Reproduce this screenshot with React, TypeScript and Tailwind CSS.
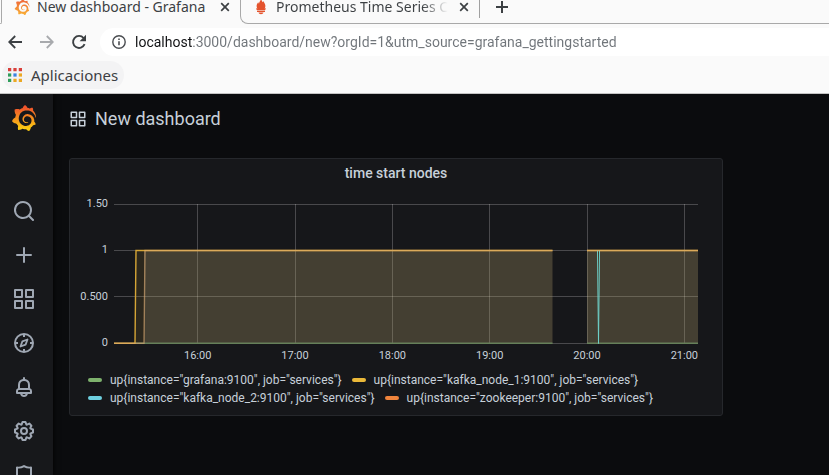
import type { ReactNode } from "react";
import { SiGrafana } from "react-icons/si";

const uiFont = "font-['Noto_Sans','Open_Sans',sans-serif]";

const icons = {
  apps: "M10,13H3a1,1,0,0,0-1,1v7a1,1,0,0,0,1,1h7a1,1,0,0,0,1-1V14A1,1,0,0,0,10,13ZM9,20H4V15H9ZM21,2H14a1,1,0,0,0-1,1v7a1,1,0,0,0,1,1h7a1,1,0,0,0,1-1V3A1,1,0,0,0,21,2ZM20,9H15V4h5Zm1,4H14a1,1,0,0,0-1,1v7a1,1,0,0,0,1,1h7a1,1,0,0,0,1-1V14A1,1,0,0,0,21,13Zm-1,7H15V15h5ZM10,2H3A1,1,0,0,0,2,3v7a1,1,0,0,0,1,1h7a1,1,0,0,0,1-1V3A1,1,0,0,0,10,2ZM9,9H4V4H9Z",
  search:
    "M21.71,20.29,18,16.61A9,9,0,1,0,16.61,18l3.68,3.68a1,1,0,0,0,1.42,0A1,1,0,0,0,21.71,20.29ZM11,18a7,7,0,1,1,7-7A7,7,0,0,1,11,18Z",
  plus: "M19,11H13V5a1,1,0,0,0-2,0v6H5a1,1,0,0,0,0,2h6v6a1,1,0,0,0,2,0V13h6a1,1,0,0,0,0-2Z",
  bell: "M18,13.18V10a6,6,0,0,0-5-5.91V3a1,1,0,0,0-2,0V4.09A6,6,0,0,0,6,10v3.18A3,3,0,0,0,4,16v2a1,1,0,0,0,1,1H8.14a4,4,0,0,0,7.72,0H19a1,1,0,0,0,1-1V16A3,3,0,0,0,18,13.18ZM8,10a4,4,0,0,1,8,0v3H8Zm4,10a2,2,0,0,1-1.72-1h3.44A2,2,0,0,1,12,20Zm6-3H6V16a1,1,0,0,1,1-1H17a1,1,0,0,1,1,1Z",
  cog: "M21.32,9.55l-1.89-.63.89-1.78A1,1,0,0,0,20.13,6L18,3.87a1,1,0,0,0-1.15-.19l-1.78.89-.63-1.89A1,1,0,0,0,13.5,2h-3a1,1,0,0,0-.95.68L8.92,4.57,7.14,3.68A1,1,0,0,0,6,3.87L3.87,6a1,1,0,0,0-.19,1.15l.89,1.78-1.89.63A1,1,0,0,0,2,10.5v3a1,1,0,0,0,.68.95l1.89.63-.89,1.78A1,1,0,0,0,3.87,18L6,20.13a1,1,0,0,0,1.15.19l1.78-.89.63,1.89a1,1,0,0,0,.95.68h3a1,1,0,0,0,.95-.68l.63-1.89,1.78.89A1,1,0,0,0,18,20.13L20.13,18a1,1,0,0,0,.19-1.15l-.89-1.78,1.89-.63A1,1,0,0,0,22,13.5v-3A1,1,0,0,0,21.32,9.55ZM20,12.78l-1.2.4A2,2,0,0,0,17.64,16l.57,1.14-1.1,1.1L16,17.64a2,2,0,0,0-2.79,1.16l-.4,1.2H11.22l-.4-1.2A2,2,0,0,0,8,17.64l-1.14.57-1.1-1.1L6.36,16A2,2,0,0,0,5.2,13.18L4,12.78V11.22l1.2-.4A2,2,0,0,0,6.36,8L5.79,6.89l1.1-1.1L8,6.36A2,2,0,0,0,10.82,5.2l.4-1.2h1.56l.4,1.2A2,2,0,0,0,16,6.36l1.14-.57,1.1,1.1L17.64,8a2,2,0,0,0,1.16,2.79l1.2.4ZM12,8a4,4,0,1,0,4,4A4,4,0,0,0,12,8Zm0,6a2,2,0,1,1,2-2A2,2,0,0,1,12,14Z",
  shield:
    "M19.63,3.65a1,1,0,0,0-.84-.2,8,8,0,0,1-6.22-1.27,1,1,0,0,0-1.14,0A8,8,0,0,1,5.21,3.45a1,1,0,0,0-.84.2A1,1,0,0,0,4,4.43v7.45a9,9,0,0,0,3.77,7.33l3.65,2.6a1,1,0,0,0,1.16,0l3.65-2.6A9,9,0,0,0,20,11.88V4.43A1,1,0,0,0,19.63,3.65ZM18,11.88a7,7,0,0,1-2.93,5.7L12,19.77,8.93,17.58A7,7,0,0,1,6,11.88V5.58a10,10,0,0,0,6-1.39,10,10,0,0,0,6,1.39Z",
};

function Icon({ path, className }: { path: string; className: string }) {
  return (
    <svg viewBox="0 0 24 24" fill="currentColor" className={className} aria-hidden="true">
      <path d={path} />
    </svg>
  );
}

function CompassIcon() {
  return (
    <svg viewBox="0 0 24 24" fill="none" stroke="currentColor" strokeWidth="2" className="size-6" aria-hidden="true">
      <circle cx="12" cy="12" r="9" />
      <path d="M12 3v3M12 18v3M3 12h3M18 12h3" />
      <path d="M15.5 8.5 13.6 13.6 8.5 15.5 10.4 10.4Z" strokeWidth="1.8" strokeLinejoin="round" />
    </svg>
  );
}

function GrafanaMark({ id, from, to, className }: { id: string; from: string; to: string; className: string }) {
  return (
    <>
      <svg className="absolute size-0" aria-hidden="true">
        <defs>
          <linearGradient id={id} x1="0" y1="0" x2="0" y2="1">
            <stop offset="0.1" stopColor={from} />
            <stop offset="0.9" stopColor={to} />
          </linearGradient>
        </defs>
      </svg>
      <SiGrafana fill={`url(#${id})`} className={className} aria-hidden="true" />
    </>
  );
}

function PrometheusMark() {
  return (
    <svg viewBox="0 0 16 16" fill="#e4532d" className="size-4 shrink-0" aria-hidden="true">
      <path d="M8 0c.3 1.500 1.300 2 1.500 3.300C10 3 10.100 2.500 10.100 2c1.200 1.600 2.300 3.200 2.300 5 0 1-.4 1.900-.8 2.500l1.400-.2c-.2.900-.6 1.400-1 1.900H4c-.5-.5-.9-1-1-1.900l1.400.2C4 8.900 3.600 8 3.600 7c0-1.400.8-2.600 1.700-3.700.1.700.3 1.100.7 1.500C6.100 3 7.600 1.800 8 0Z" />
      <path d="M4 11.700h8v1.400H4zM5.500 13.500h5c-.3 1-1.200 1.700-2.500 1.700s-2.200-.7-2.500-1.700Z" />
    </svg>
  );
}

function CloseIcon() {
  return (
    <svg viewBox="0 0 10 10" fill="none" stroke="#3c4043" strokeWidth="1.700" className="size-2.5" aria-hidden="true">
      <path d="m1.200 1.200 7.600 7.600M8.800 1.200 1.200 8.800" />
    </svg>
  );
}

function Tab({ icon, title, fade, className }: { icon: ReactNode; title: string; fade?: boolean; className: string }) {
  return (
    <div className={`flex h-3.5 items-center ${className}`}>
      {icon}
      <span className="ml-[7px] flex-1 whitespace-nowrap leading-5">
        <span
          className={fade ? "bg-[linear-gradient(90deg,#3c4043_85%,#fafafa_100%)] bg-clip-text text-transparent" : ""}
        >
          {title}
        </span>
      </span>
      <button type="button" aria-label={`Close ${title}`} className="p-0.5">
        <CloseIcon />
      </button>
    </div>
  );
}

const appDots = ["#d93f3a", "#d93f3a", "#d93f3a", "#2f9e5b", "#3b82e0", "#eba823", "#2f9e5b", "#eba823", "#eba823"];

function Browser() {
  return (
    <header className={`shrink-0 border-b border-[#c4c4c4] bg-[#fafafa] text-[#3c4043] ${uiFont}`}>
      <div className="flex h-6 text-[14px]">
        <div className="w-0.5 rounded-br-lg border-r border-b border-[#a9a9a9]" />
        <Tab
          className="w-[238px] pr-2 pl-3"
          icon={<GrafanaMark id="favicon" from="#ef6a3a" to="#f8a935" className="size-4 shrink-0" />}
          title="New dashboard - Grafana"
        />
        <div className="flex flex-1 rounded-bl-lg border-b border-l border-[#a9a9a9]">
          <div className="flex h-[18px] w-[239px] border-r border-[#a0a0a0]">
            <Tab className="w-full pr-2 pl-3" icon={<PrometheusMark />} title="Prometheus Time Series C" fade />
          </div>
          <button type="button" aria-label="New tab" className="ml-4 flex h-3.5 items-center">
            <svg viewBox="0 0 12 12" stroke="#3c4043" strokeWidth="2" className="size-3" aria-hidden="true">
              <path d="M6 0v12M0 6h12" />
            </svg>
          </button>
        </div>
      </div>

      <div className="flex h-9 items-center pl-2">
        <button type="button" aria-label="Back">
          <svg viewBox="0 0 14 14" fill="none" stroke="#3c4043" strokeWidth="1.800" className="size-3.5" aria-hidden="true">
            <path d="M14 7H1.500M7.200 1 1.200 7l6 6" />
          </svg>
        </button>
        <button type="button" aria-label="Forward" className="ml-[18px]" disabled>
          <svg viewBox="0 0 14 14" fill="none" stroke="#a8aaad" strokeWidth="1.800" className="size-3.5" aria-hidden="true">
            <path d="M0 7h12.500M6.800 1l6 6-6 6" />
          </svg>
        </button>
        <button type="button" aria-label="Reload" className="ml-[17px]">
          <svg viewBox="0 0 16 16" fill="none" stroke="#3c4043" strokeWidth="1.900" className="size-4" aria-hidden="true">
            <path d="M13.600 10.200A6 6 0 1 1 12.600 4L14 5.500" />
            <path d="M15 .8v6.400H8.600Z" fill="#3c4043" stroke="none" />
          </svg>
        </button>
        <div className="ml-[13px] flex h-7 flex-1 items-center rounded-l-full bg-white pl-3">
          <svg viewBox="0 0 14 14" fill="none" stroke="#4a4d51" strokeWidth="1.400" className="size-3.5 shrink-0" aria-hidden="true">
            <circle cx="7" cy="7" r="6.200" />
            <path d="M7 6.200v4M7 3.600v1.500" strokeWidth="1.600" />
          </svg>
          <input
            type="text"
            aria-label="Address"
            defaultValue="localhost:3000/dashboard/new?orgId=1&utm_source=grafana_gettingstarted"
            className="ml-[9px] min-w-0 flex-1 bg-[linear-gradient(90deg,#111214_58px,#70757a_58px)] bg-clip-text font-[Roboto,sans-serif] text-[14px] leading-5 text-transparent outline-none"
          />
        </div>
      </div>

      <nav className="flex h-[33px] items-start px-0.5 pt-px">
        <a href="#apps" className="flex h-7 items-center gap-[9px] rounded-full bg-[#f3f3f4] px-1.5 text-[15px] leading-5">
          <svg viewBox="0 0 13 13" className="size-[14px]" aria-hidden="true">
            {appDots.map((color, i) => (
              <rect key={i} x={(i % 3) * 5} y={Math.floor(i / 3) * 5} width="3" height="3" fill={color} />
            ))}
          </svg>
          Aplicaciones
        </a>
      </nav>
    </header>
  );
}

const menu: { label: string; icon: ReactNode }[] = [
  { label: "Search", icon: <Icon path={icons.search} className="size-6" /> },
  { label: "Create", icon: <Icon path={icons.plus} className="size-6" /> },
  { label: "Dashboards", icon: <Icon path={icons.apps} className="size-6" /> },
  { label: "Explore", icon: <CompassIcon /> },
  { label: "Alerting", icon: <Icon path={icons.bell} className="size-6" /> },
  { label: "Configuration", icon: <Icon path={icons.cog} className="size-6" /> },
  { label: "Server admin", icon: <Icon path={icons.shield} className="size-6" /> },
];

function Sidebar() {
  return (
    <aside className="w-[53px] shrink-0 bg-[#17181b] pr-1.5 text-[#9fa7b3] shadow-[0_0_6px_#000]">
      <a href="#home" aria-label="Home" className="flex h-12 items-center justify-center">
        <GrafanaMark id="brand" from="#f0542c" to="#fcca12" className="size-[26px]" />
      </a>
      <nav className="mt-[47px]">
        {menu.map((item) => (
          <a key={item.label} href="#menu" aria-label={item.label} className="flex h-11 items-center justify-center">
            {item.icon}
          </a>
        ))}
      </nav>
    </aside>
  );
}

function Chart() {
  const stroke = { fill: "none", strokeWidth: 1, vectorEffect: "non-scaling-stroke" } as const;
  const series = { ...stroke, strokeWidth: 1.4 };
  return (
    <svg
      viewBox="0 0 584 140"
      preserveAspectRatio="none"
      className="h-[140px] w-full overflow-visible"
      role="img"
      aria-label="Service availability over time"
    >
      <path
        d="M0 .5H584M0 46.500H584M0 92.500H584M0 139.500H584M83.500 0V140M181.500 0V140M278.500 0V140M375.500 0V140M473.500 0V140M570.500 0V140"
        stroke="#fff"
        strokeOpacity="0.22"
        {...stroke}
      />
      <g fillOpacity="0.1">
        <path d="M21 139.500 22 46.500H438.500V139.500ZM473 139.500V46.500H584V139.500Z" fill="#eab839" />
        <path d="M30 139.500V46.500H438.500V139.500ZM473 139.500V46.500H483.500L485 139.500V46.500H584V139.500Z" fill="#6ed0e0" />
        <path d="M30 139.500V46.500H438.500V139.500ZM473 139.500V46.500H584V139.500Z" fill="#ef843c" />
      </g>
      <path d="M21 139.200H438.500M473 139.200H584" stroke="#66805a" {...series} />
      <path d="M0 139.200H21L22 46.500H438.500M473 46.500H584" stroke="#d5a536" {...series} />
      <path d="M483.500 46.500 484.500 139.500 485.500 46.500" stroke="#6ed0c8" {...stroke} />
      <path d="M0 139.200H30L31 46.500H438.500M473 46.500H584" stroke="#e0ae74" strokeOpacity="0.6" {...series} />
    </svg>
  );
}

const legend = [
  { name: 'up{instance="grafana:9100", job="services"}', swatch: "bg-[#7eb26d]" },
  { name: 'up{instance="kafka_node_1:9100", job="services"}', swatch: "bg-[#eab839]" },
  { name: 'up{instance="kafka_node_2:9100", job="services"}', swatch: "bg-[#6ed0e0]" },
  { name: 'up{instance="zookeeper:9100", job="services"}', swatch: "bg-[#ef843c]" },
];

function Panel() {
  return (
    <section className="rounded-[3px] border border-[#26282c] bg-[#16171a] pb-2 text-[12px] leading-4 text-[#c7d0d9]">
      <h2 className="h-[29px] text-center text-[14px] leading-7 font-medium">time start nodes</h2>
      <div className="mt-2 flex gap-1.5 pr-6">
        <div className="flex h-[155px] w-[38px] shrink-0 flex-col justify-between text-right text-[11px]">
          <span>1.50</span>
          <span>1</span>
          <span>0.500</span>
          <span>0</span>
        </div>
        <div className="min-w-0 flex-1 pt-2">
          <Chart />
          <div className="-mr-[35px] ml-[35px] grid grid-cols-6 pt-1 text-center text-[11px]">
            {["16:00", "17:00", "18:00", "19:00", "20:00", "21:00"].map((t) => (
              <span key={t}>{t}</span>
            ))}
          </div>
        </div>
      </div>
      <ul className="mt-[7px] flex flex-wrap gap-x-2.5 pl-[18px]">
        {legend.map((item) => (
          <li key={item.name}>
            <button type="button" className="flex h-[18px] items-center gap-2">
              <span className={`h-1 w-3.5 rounded-[2px] ${item.swatch}`} />
              <span>{item.name}</span>
            </button>
          </li>
        ))}
      </ul>
    </section>
  );
}

export default function App() {
  return (
    <div className="flex h-screen flex-col overflow-hidden">
      <Browser />
      <div className="flex min-h-0 flex-1 overflow-hidden bg-[#0b0c0e] font-[Roboto,sans-serif]">
        <Sidebar />
        <main className="min-w-0 flex-1 pr-[106px] pl-4">
          <div className="mb-[15px] flex h-[49px] items-center gap-2 text-[#c7d0d9]">
            <Icon path={icons.apps} className="size-[18px]" />
            <h1 className="text-[18px] leading-6">New dashboard</h1>
          </div>
          <Panel />
        </main>
      </div>
    </div>
  );
}
